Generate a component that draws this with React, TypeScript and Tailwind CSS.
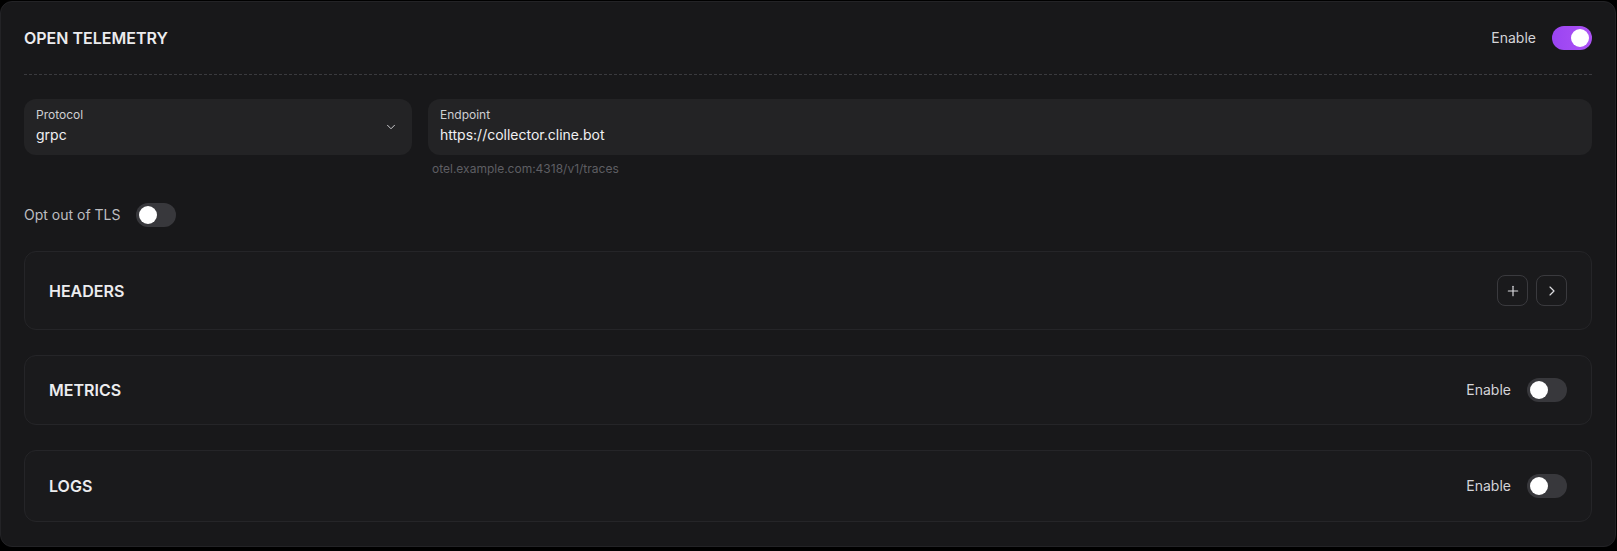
import { ChevronDown, ChevronRight, Plus } from "lucide-react";

function Toggle({ on = false }: { on?: boolean }) {
  return (
    <div
      className={`flex h-6 w-10 shrink-0 items-center rounded-full px-[3px] ${
        on ? "justify-end bg-gradient-to-r from-[#9a44f2] to-[#ad52f5]" : "justify-start bg-[#38383c]"
      }`}
    >
      <div className="size-[18px] rounded-full bg-white" />
    </div>
  );
}

function Section({
  title,
  tall = false,
  children,
}: {
  title: string;
  tall?: boolean;
  children: React.ReactNode;
}) {
  return (
    <div
      className={`flex items-center justify-between rounded-xl border border-[#252528] bg-[#1a1a1c] px-6 ${
        tall ? "py-[23px]" : "py-[22px]"
      }`}
    >
      <h3 className="text-base font-semibold leading-6 text-[#ececee]">{title}</h3>
      {children}
    </div>
  );
}

function EnableToggle() {
  return (
    <div className="flex items-center gap-4">
      <span className="text-sm text-[#d4d4d8]">Enable</span>
      <Toggle />
    </div>
  );
}

export default function App() {
  return (
    <div
      className="h-[551px] w-[1617px] bg-black pt-px"
      style={{ fontFamily: "Inter, 'Noto Sans', sans-serif" }}
    >
      <div className="w-[1616px] rounded-xl border border-[#232326] bg-[#18181a] px-[23px] pt-6 pb-6">
        <div className="box-content flex h-6 items-center justify-between border-b border-dashed border-[#3a3a3e] pb-6">
          <h2 className="text-base font-semibold text-[#ececee]">OPEN TELEMETRY</h2>
          <div className="flex items-center gap-4">
            <span className="text-sm text-[#d4d4d8]">Enable</span>
            <Toggle on />
          </div>
        </div>

        <div className="mt-6 flex gap-4">
          <div className="w-[388px] shrink-0">
            <div className="flex h-14 items-center justify-between rounded-xl bg-[#232325] pl-3 pr-[14px]">
              <div className="pb-0.5">
                <p className="text-xs leading-4 text-[#cfcfd3]">Protocol</p>
                <p className="mt-0.5 text-sm leading-5 text-[#f0f0f2]">grpc</p>
              </div>
              <ChevronDown className="size-[14px] text-[#e4e4e7]" strokeWidth={1.5} />
            </div>
          </div>
          <div className="flex-1">
            <div className="flex h-14 flex-col justify-center rounded-xl bg-[#232325] px-3">
              <div className="pb-0.5">
                <p className="text-xs leading-4 text-[#cfcfd3]">Endpoint</p>
                <p className="mt-0.5 text-sm leading-5 text-[#f0f0f2]">https://collector.cline.bot</p>
              </div>
            </div>
            <p className="mt-1.5 pl-1 text-xs leading-4 text-[#5e5e63]">
              otel.example.com:4318/v1/traces
            </p>
          </div>
        </div>

        <div className="mt-[26px] flex items-center gap-4">
          <span className="text-sm text-[#bdbdc1]">Opt out of TLS</span>
          <Toggle />
        </div>

        <div className="mt-6 flex flex-col gap-[25px]">
          <Section title="HEADERS" tall>
            <div className="flex items-center gap-2">
              <button className="grid size-[31px] place-items-center rounded-lg border border-[#3a3a3e] text-[#dcdce0]">
                <Plus className="size-4" strokeWidth={1.75} />
              </button>
              <button className="grid size-[31px] place-items-center rounded-lg border border-[#3a3a3e] text-[#dcdce0]">
                <ChevronRight className="size-4" strokeWidth={1.75} />
              </button>
            </div>
          </Section>
          <Section title="METRICS">
            <EnableToggle />
          </Section>
          <Section title="LOGS" tall>
            <EnableToggle />
          </Section>
        </div>
      </div>
    </div>
  );
}
